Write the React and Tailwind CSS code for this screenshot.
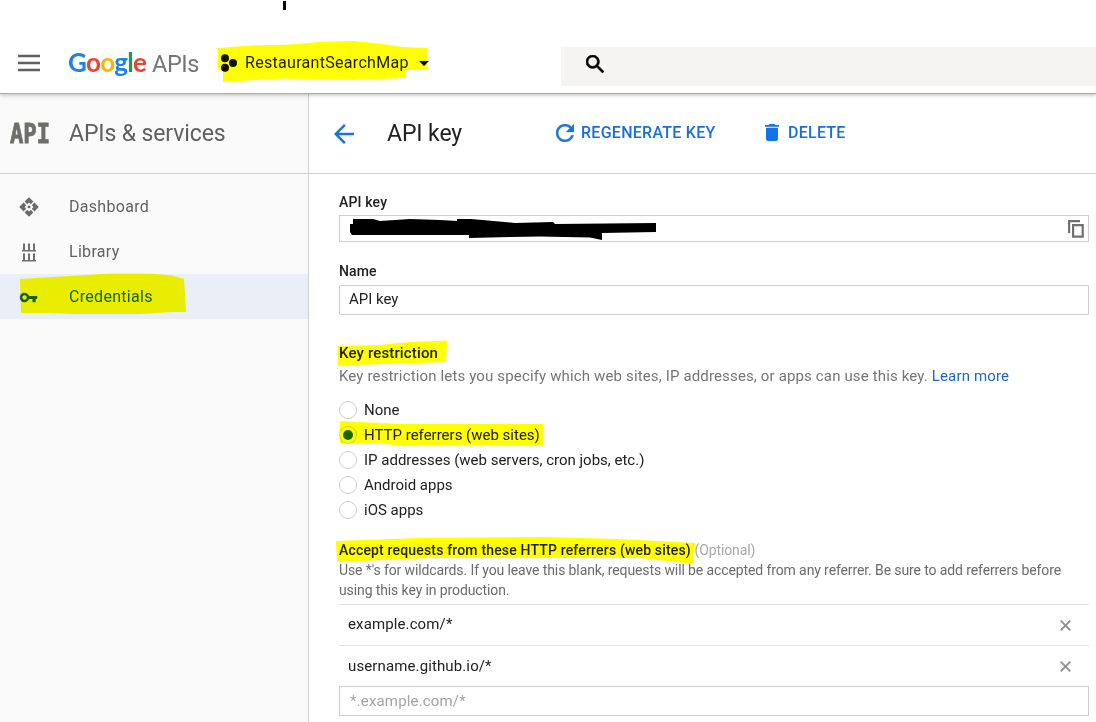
import React from 'react';

function Radio({ label, checked }) {
  return (
    <label className="flex h-[25px] items-center">
      <span className="flex h-[18px] w-[18px] items-center justify-center rounded-full border border-[#cfcfcf] bg-white">
        {checked && <span className="h-[10px] w-[10px] rounded-full bg-[#1565c0]" />}
      </span>
      <span className="ml-[7px] text-[15px] leading-5">{label}</span>
    </label>
  );
}

function NavItem({ icon, label, active }) {
  return (
    <div className={active ? 'flex h-[45px] items-center bg-[#e9eef7] text-[#1a62cf]' : 'flex h-[45px] items-center text-[#616161]'}>
      <span className="flex w-[69px] items-center pl-[19px] pt-px">{icon}</span>
      <span className="text-base tracking-[0.3px]">{label}</span>
    </div>
  );
}

function ReferrerRow({ value }) {
  return (
    <div className="flex h-[41px] items-center justify-between border-t border-[#e0e0e0] pl-[9px] pr-[18px] first:[&>span]:-mt-[3px]">
      <span className="-mt-px text-[15px] leading-5 tracking-[0.12px]">{value}</span>
      <svg className="h-[11px] w-[11px]" viewBox="0 0 11 11" fill="none" stroke="#8f8f8f" strokeWidth="1.9">
        <path d="M.7.7l9.6 9.6M10.3.7.7 10.3" />
      </svg>
    </div>
  );
}

const dashboardIcon = (
  <svg className="h-5 w-5" viewBox="0 0 20 20" fill="#6b6b6b">
    <path d="M10 .2l4.400 4.400-2.600 2.600L10 5.600 8.200 7.200 5.600 4.600zM10 19.800l4.400-4.400-2.600-2.600L10 14.400l-1.800-1.600-2.600 2.600zM.2 10l4.400-4.400 2.600 2.600L5.600 10l1.600 1.800-2.600 2.600zM19.800 10l-4.400-4.400-2.600 2.600 1.600 1.800-1.600 1.800 2.600 2.600zM10 8.200l1.800 1.800-1.800 1.800L8.200 10z" />
  </svg>
);

const libraryIcon = (
  <svg className="h-5 w-5" viewBox="0 0 20 20" fill="#707070">
    <path d="M3 8h14v1.500H3zM4 1.500h2V8H4zM9 1.500h2V8H9zM14 1.500h2V8h-2zM3 18h14v1.500H3zM4 11.500h2V18H4zM9 11.500h2V18H9zM14 11.500h2V18h-2z" />
  </svg>
);

const keyIcon = (
  <svg className="h-[19px] w-[19px]" viewBox="0 0 24 24" fill="#1a62cf">
    <path d="M12.650 10C11.830 7.670 9.610 6 7 6c-3.310 0-6 2.690-6 6s2.690 6 6 6c2.610 0 4.830-1.670 5.650-4H17v4h4v-4h2v-4H12.650zM7 14.800c-1.540 0-2.800-1.260-2.800-2.800s1.260-2.800 2.800-2.800 2.800 1.260 2.800 2.800-1.260 2.800-2.800 2.800z" />
  </svg>
);

function Highlights() {
  return (
    <svg className="h-[722px] w-[1096px]" viewBox="0 0 1096 722" fill="#ffff00">
      <path d="M218 48L250 45.500 290 44.500 320 42 352 41 380 43.500 402 47 427 48V70H405V78L352 80 282 78.500 223 82V69H218z" />
      <path d="M20 279L70 276 110 273.500 150 273.500 172 275.500 184 279 186 312H172L140 314H74L50 313H21z" />
      <path d="M338 346L380 345 410 342 447 340.500 446 362 400 363.500 352 365 338 366z" />
      <path d="M340 421L400 424H543V445H396L372 443H340z" />
      <path d="M336 541L420 538 540 537 620 539 695 543 693 564 685 563 640 558H430L337 562z" />
    </svg>
  );
}

export default function App() {
  return (
    <div className="relative h-[722px] w-[1096px] overflow-hidden bg-white font-['Roboto',sans-serif] text-[#212121]">
      <header className="relative z-10 h-[94px] border-b border-[#aeaea6] bg-white pt-[43px] shadow-[0_1px_4px_rgba(60,60,40,0.35)]">
        <span className="absolute left-[283px] top-px h-[9px] w-[3px] bg-black" />
        <div className="flex h-10 items-center">
          <svg className="ml-[18px] h-[18px] w-[22px]" viewBox="0 0 22 18" fill="#616161">
            <path d="M0 .8h22v2.400H0zM0 7.800h22v2.400H0zM0 14.800h22v2.400H0z" />
          </svg>
          <div className="-mt-px ml-[28px] flex w-[152px] items-baseline whitespace-nowrap">
            <span className="w-[84px] font-['Lato'] text-[26px] font-bold tracking-[-0.75px]">
              <span className="text-[#1e80e8]">G</span>
              <span className="text-[#ea4335]">o</span>
              <span className="text-[#fbb305]">o</span>
              <span className="text-[#1e80e8]">g</span>
              <span className="text-[#209a50]">l</span>
              <span className="text-[#ea4335]">e</span>
            </span>
            <span className="text-[23.5px] tracking-[-0.4px] text-[#757575]">APIs</span>
          </div>
          <div className="flex w-[341px] items-center">
            <svg className="h-[18px] w-[17px]" viewBox="0 0 17 18" fill="#111">
              <circle cx="5" cy="4.2" r="4" />
              <circle cx="13" cy="9" r="4" />
              <circle cx="5" cy="13.8" r="4" />
            </svg>
            <span className="ml-2 w-[164px] whitespace-nowrap text-base tracking-[0.3px]">RestaurantSearchMap</span>
            <span className="ml-[10px] border-x-[5px] border-t-[5px] border-x-transparent border-t-black" />
          </div>
          <div className="mt-[7px] h-[39px] flex-1 bg-[#f5f4f3] pl-[25px] pt-[8px]">
            <svg className="h-[18px] w-[18px]" viewBox="3 3 17.5 17.5" fill="#000" stroke="#000" strokeWidth=".6">
              <path d="M15.5 14h-.79l-.28-.27C15.410 12.590 16 11.110 16 9.500 16 5.910 13.090 3 9.500 3S3 5.910 3 9.500 5.910 16 9.500 16c1.610 0 3.090-.59 4.230-1.570l.27.28v.79l5 4.990L20.490 19l-4.990-5zm-6 0C7.010 14 5 11.990 5 9.500S7.010 5 9.500 5 14 7.010 14 9.500 11.990 14 9.500 14z" />
            </svg>
          </div>
        </div>
      </header>

      <div className="flex h-[628px]">
        <aside className="w-[309px] shrink-0 border-r border-[#d0d0d0] bg-[#fafafa]">
          <div className="flex h-20 items-center border-b border-[#d0d0d0] text-[#5f5f5f]">
            <span className="flex w-[69px] items-center pl-[10px]">
              <span className="origin-left scale-x-[0.82] font-['DejaVu_Sans_Mono'] text-[27px] font-bold leading-none text-[#6e6e6a] [-webkit-text-stroke:0.9px_#6e6e6a]">API</span>
            </span>
            <span className="mt-px whitespace-nowrap text-[23px] tracking-[-0.12px]">APIs &amp; services</span>
          </div>
          <nav className="pt-[10px]">
            <NavItem icon={dashboardIcon} label="Dashboard" />
            <NavItem icon={libraryIcon} label="Library" />
            <NavItem icon={keyIcon} label="Credentials" active />
          </nav>
        </aside>

        <main className="flex-1">
          <div className="flex h-20 items-center border-b border-[#d0d0d0] pl-[25px]">
            <svg className="h-5 w-5" viewBox="4 4 16 16" fill="#1976d2">
              <path d="M20 11H7.830l5.590-5.590L12 4l-8 8 8 8 1.410-1.410L7.830 13H20v-2z" />
            </svg>
            <h1 className="ml-[33px] mt-[2px] w-[169px] text-[23px] tracking-[-0.1px]">API key</h1>
            <button className="flex w-[209px] items-center text-[#1a6fd6]">
              <svg className="-mt-[2px] h-[18px] w-[18px]" viewBox="4 4 16 16" fill="#1976d2" stroke="#1976d2" strokeWidth=".3">
                <path d="M17.650 6.350C16.200 4.900 14.210 4 12 4c-4.420 0-7.990 3.580-7.990 8s3.570 8 7.990 8c3.730 0 6.840-2.550 7.730-6h-2.080c-.82 2.330-3.040 4-5.650 4-3.310 0-6-2.690-6-6s2.690-6 6-6c1.660 0 3.140.69 4.220 1.780L13 11h7V4l-2.350 2.350z" />
              </svg>
              <span className="-mt-[2px] ml-[7px] whitespace-nowrap text-base font-medium tracking-[0.27px]">REGENERATE KEY</span>
            </button>
            <button className="flex items-center text-[#1a6fd6]">
              <svg className="-mt-[2px] h-[17px] w-[14px]" viewBox="5 3 14 18" preserveAspectRatio="none" fill="#1473e6">
                <path d="M6 19c0 1.100.9 2 2 2h8c1.100 0 2-.9 2-2V7H6v12zM19 4h-3.500l-1-1h-5l-1 1H5v2h14V4z" />
              </svg>
              <span className="-mt-[2px] ml-[9px] text-base font-medium tracking-[0.25px]">DELETE</span>
            </button>
          </div>

          <div className="ml-[30px] w-[750px] pt-[18px]">
            <h2 className="text-sm font-medium leading-5 tracking-[0.15px]">API key</h2>
            <div className="mt-[3px] flex h-[27px] items-center justify-between border border-[#cfcfcf] pl-[9px] pr-[4px]">
              <svg className="h-[25px] w-[308px]" viewBox="349 216 308 25" fill="#000">
                <path d="M353 219H373L380 221 410 219 440 220 457 221V219H471L515 223 553 222 555 224 656 223V232L602 233V240L590 237.500 540 236.500 510 237 469 238V235H352L350 232V224H353z" />
              </svg>
              <svg className="h-[18px] w-[16px]" viewBox="0 0 16 18" fill="none" stroke="#707070" strokeWidth="2.2">
                <path d="M1.100 13V1.100H12M5.100 5.100h9.600v11.600H5.100z" />
              </svg>
            </div>
            <h2 className="mt-[19px] text-sm font-medium leading-5 tracking-[0.15px]">Name</h2>
            <div className="mt-1 flex h-[30px] items-center border border-[#cfcfcf] pl-[9px] text-[15px]">
              <span className="-mt-[2px]">API key</span>
            </div>

            <h2 className="mt-7 text-[15px] font-medium leading-5 tracking-[0.15px]">Key restriction</h2>
            <p className="mt-[3px] whitespace-nowrap text-[15px] leading-5 tracking-[0.147px] text-[#757575]">
              Key restriction lets you specify which web sites, IP addresses, or apps can use this key. <a className="text-[#1967c8]">Learn more</a>
            </p>
            <div className="mt-[11px]">
              <Radio label="None" />
              <Radio label="HTTP referrers (web sites)" checked />
              <Radio label="IP addresses (web servers, cron jobs, etc.)" />
              <Radio label="Android apps" />
              <Radio label="iOS apps" />
            </div>

            <h2 className="mt-[18px] whitespace-nowrap text-sm font-medium leading-5 tracking-[0.17px]">
              Accept requests from these HTTP referrers (web sites) <span className="font-normal tracking-[-0.12px] text-[#a8a8a8]">(Optional)</span>
            </h2>
            <p className="whitespace-nowrap text-sm leading-5 tracking-[-0.11px] text-[#6b6b6b]">
              Use *'s for wildcards. If you leave this blank, requests will be accepted from any referrer. Be sure to add referrers before
              <br />
              using this key in production.
            </p>
            <div className="mt-1">
              <ReferrerRow value="example.com/*" />
              <ReferrerRow value="username.github.io/*" />
            </div>
            <div className="flex h-[30px] items-center border border-[#cfcfcf] pl-[10px] text-[15px] tracking-[0.17px] text-[#a3a3a3]">*.example.com/*</div>
          </div>
        </main>
      </div>
      <div className="pointer-events-none absolute inset-0 z-20 mix-blend-multiply">
        <Highlights />
      </div>
    </div>
  );
}
